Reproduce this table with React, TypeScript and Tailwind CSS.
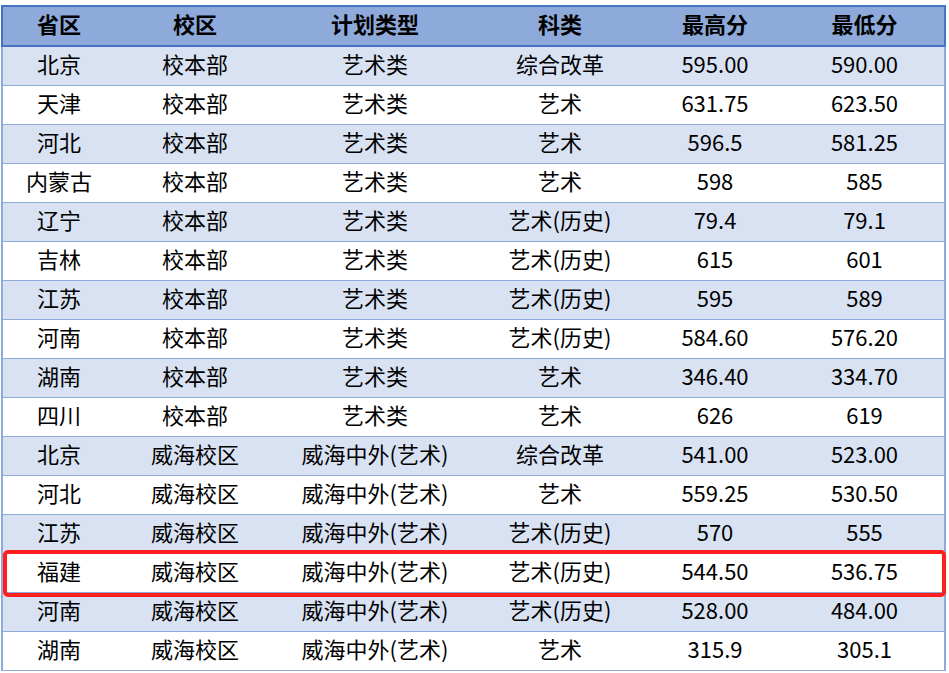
const headers = ["省区", "校区", "计划类型", "科类", "最高分", "最低分"];

const rows: string[][] = [
  ["北京", "校本部", "艺术类", "综合改革", "595.00", "590.00"],
  ["天津", "校本部", "艺术类", "艺术", "631.75", "623.50"],
  ["河北", "校本部", "艺术类", "艺术", "596.5", "581.25"],
  ["内蒙古", "校本部", "艺术类", "艺术", "598", "585"],
  ["辽宁", "校本部", "艺术类", "艺术(历史)", "79.4", "79.1"],
  ["吉林", "校本部", "艺术类", "艺术(历史)", "615", "601"],
  ["江苏", "校本部", "艺术类", "艺术(历史)", "595", "589"],
  ["河南", "校本部", "艺术类", "艺术(历史)", "584.60", "576.20"],
  ["湖南", "校本部", "艺术类", "艺术", "346.40", "334.70"],
  ["四川", "校本部", "艺术类", "艺术", "626", "619"],
  ["北京", "威海校区", "威海中外(艺术)", "综合改革", "541.00", "523.00"],
  ["河北", "威海校区", "威海中外(艺术)", "艺术", "559.25", "530.50"],
  ["江苏", "威海校区", "威海中外(艺术)", "艺术(历史)", "570", "555"],
  ["福建", "威海校区", "威海中外(艺术)", "艺术(历史)", "544.50", "536.75"],
  ["河南", "威海校区", "威海中外(艺术)", "艺术(历史)", "528.00", "484.00"],
  ["湖南", "威海校区", "威海中外(艺术)", "艺术", "315.9", "305.1"],
];

const colWidths = ["w-[113px]", "w-[160px]", "w-[200px]", "w-[170px]", "w-[140px]", "w-[160px]"];

export default function App() {
  return (
    <div
      className="w-[949px] h-[673px] bg-white pt-[5px] pl-[1px]"
      style={{ fontFamily: '"Noto Sans CJK SC", "Noto Sans", sans-serif' }}
    >
      <div className="relative w-[945px]">
        <table className="w-[945px] table-fixed border-collapse text-[22px] text-black">
          <colgroup>
            {colWidths.map((w, i) => (
              <col key={i} className={w} />
            ))}
          </colgroup>
          <thead>
            <tr className="h-[40px] bg-[#8eaadb]">
              {headers.map((h, i) => (
                <th
                  key={h}
                  className={
                    "border-y-2 border-[#4472c4] p-0 pb-[6px] text-center font-bold leading-none " +
                    (i === 0 ? "border-l-2 " : "") +
                    (i === headers.length - 1 ? "border-r-2" : "")
                  }
                >
                  {h}
                </th>
              ))}
            </tr>
          </thead>
          <tbody>
            {rows.map((r, ri) => (
              <tr key={ri} className={"h-[39px] " + (ri % 2 === 0 ? "bg-[#d9e2f3]" : "bg-white")}>
                {r.map((c, ci) => (
                  <td
                    key={ci}
                    className={
                      "border-b border-[#8eaadb] p-0 pb-[5px] text-center font-normal leading-none " +
                      (ci === 0 ? "border-l-2 " : "") +
                      (ci === r.length - 1 ? "border-r-2" : "")
                    }
                  >
                    {c}
                  </td>
                ))}
              </tr>
            ))}
          </tbody>
        </table>
        {/* highlight around the 福建 row */}
        <div className="pointer-events-none absolute left-[2px] top-[545px] h-[47px] w-[943px] rounded-[5px] border-[4px] border-[#ff1f1f]" />
      </div>
    </div>
  );
}
